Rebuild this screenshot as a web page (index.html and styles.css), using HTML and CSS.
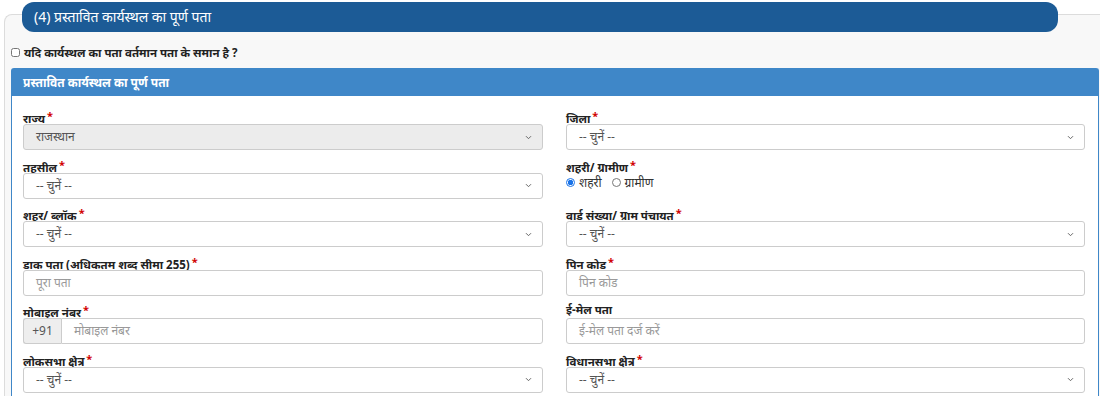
FILE: index.html
```html
<!DOCTYPE html>
<html lang="hi">
<head>
<meta charset="utf-8">
<title>प्रस्तावित कार्यस्थल का पूर्ण पता</title>
<link rel="stylesheet" href="styles.css">
</head>
<body>
<div class="section">
  <div class="section-title">(4) प्रस्तावित कार्यस्थल का पूर्ण पता</div>
  <label class="same-check"><input type="checkbox"> यदि कार्यस्थल का पता वर्तमान पता के समान है ?</label>
  <div class="panel">
    <div class="panel-heading">प्रस्तावित कार्यस्थल का पूर्ण पता</div>
    <div class="panel-body">
      <div class="field">
        <div class="lbl">राज्य<span class="req">*</span></div>
        <div class="select disabled">राजस्थान</div>
      </div>
      <div class="field">
        <div class="lbl">जिला<span class="req">*</span></div>
        <div class="select">-- चुनें --</div>
      </div>
      <div class="field">
        <div class="lbl">तहसील<span class="req">*</span></div>
        <div class="select">-- चुनें --</div>
      </div>
      <div class="field">
        <div class="lbl">शहरी/ ग्रामीण<span class="req">*</span></div>
        <div class="radios">
          <label class="radio"><span class="dot on"></span>शहरी</label>
          <label class="radio"><span class="dot"></span>ग्रामीण</label>
        </div>
      </div>
      <div class="field">
        <div class="lbl">शहर/ ब्लॉक<span class="req">*</span></div>
        <div class="select">-- चुनें --</div>
      </div>
      <div class="field">
        <div class="lbl">वार्ड संख्या/ ग्राम पंचायत<span class="req">*</span></div>
        <div class="select">-- चुनें --</div>
      </div>
      <div class="field">
        <div class="lbl">डाक पता (अधिकतम शब्द सीमा 255)<span class="req">*</span></div>
        <div class="input ph">पूरा पता</div>
      </div>
      <div class="field">
        <div class="lbl">पिन कोड<span class="req">*</span></div>
        <div class="input ph">पिन कोड</div>
      </div>
      <div class="field">
        <div class="lbl">मोबाइल नंबर<span class="req">*</span></div>
        <div class="group">
          <span class="addon">+91</span>
          <div class="input ph grow">मोबाइल नंबर</div>
        </div>
      </div>
      <div class="field">
        <div class="lbl">ई-मेल पता</div>
        <div class="input ph">ई-मेल पता दर्ज करें</div>
      </div>
      <div class="field">
        <div class="lbl">लोकसभा क्षेत्र<span class="req">*</span></div>
        <div class="select">-- चुनें --</div>
      </div>
      <div class="field">
        <div class="lbl">विधानसभा क्षेत्र<span class="req">*</span></div>
        <div class="select">-- चुनें --</div>
      </div>
    </div>
  </div>
</div>
</body>
</html>
```
FILE: styles.css
```css
html, body {
  margin: 0;
  padding: 0;
  background: #ffffff;
  font-family: "Noto Sans", "Liberation Sans", sans-serif;
  color: #222;
}
.section {
  margin: 14px 0 0 4px;
  border: 1px solid #dcdcdc;
  border-right: none;
  border-bottom: none;
  border-top-left-radius: 8px;
  background: #f8f8f8;
}
.section-title {
  margin: -13px 0 0 17px;
  width: 1036px;
  height: 30px;
  box-sizing: border-box;
  padding-left: 12px;
  line-height: 30px;
  background: #1c5b96;
  color: #fff;
  font-size: 14px;
  border-radius: 12px;
}
.same-check {
  display: flex;
  align-items: center;
  gap: 4px;
  margin: 12px 0 0 6px;
  height: 17px;
  font-size: 11.5px;
  font-weight: bold;
  color: #222;
}
.same-check input {
  margin: 0;
  width: 9px;
  height: 9px;
}
.panel {
  margin: 7px 0 0 6px;
  width: 1086px;
  border: 1px solid #3f87c8;
  border-bottom: none;
  border-radius: 3px 3px 0 0;
  background: #fff;
}
.panel-heading {
  height: 27px;
  line-height: 27px;
  background: #3f87c8;
  color: #fff;
  font-weight: bold;
  font-size: 12px;
  padding-left: 11px;
}
.panel-body {
  display: grid;
  grid-template-columns: 520px 519px;
  column-gap: 23px;
  row-gap: 5.6px;
  padding: 11px 11px 4px 11px;
}
.field {
  display: flex;
  flex-direction: column;
}
.lbl {
  height: 17px;
  line-height: 17px;
  font-size: 11.5px;
  font-weight: bold;
  color: #222;
}
.req {
  color: #d10000;
  margin-left: 2px;
  font-size: 11px;
  vertical-align: 3px;
}
.select, .input {
  height: 26px;
  box-sizing: border-box;
  border: 1px solid #ccc;
  border-radius: 3px;
  background: #fff;
  font-size: 12px;
  line-height: 24px;
  padding-left: 12px;
  color: #555;
}
.select {
  background-image: url("data:image/svg+xml,%3Csvg xmlns='http://www.w3.org/2000/svg' width='7' height='5' viewBox='0 0 7 5'%3E%3Cpath d='M1 1.2l2.5 2.5 2.5-2.5' fill='none' stroke='%23666' stroke-width='1'/%3E%3C/svg%3E");
  background-repeat: no-repeat;
  background-position: right 10px center;
}
.select.disabled {
  background-color: #ececec;
}
.input.ph {
  color: #999;
}
.group {
  display: flex;
}
.addon {
  width: 38px;
  height: 26px;
  box-sizing: border-box;
  border: 1px solid #ccc;
  border-right: none;
  border-radius: 3px 0 0 3px;
  background: #eee;
  color: #555;
  font-size: 12px;
  line-height: 24px;
  text-align: center;
}
.grow {
  flex: 1;
  border-radius: 0 3px 3px 0;
}
.radios {
  display: flex;
  align-items: center;
  gap: 10px;
  height: 20px;
  font-size: 12px;
  color: #333;
}
.radio {
  display: flex;
  align-items: center;
  gap: 4px;
}
.dot {
  width: 9px;
  height: 9px;
  border-radius: 50%;
  border: 1px solid #777;
  background: #fff;
  box-sizing: border-box;
}
.dot.on {
  border: 1px solid #1a73e8;
  background: radial-gradient(circle, #1a73e8 0 2.5px, #fff 3px);
}
```
